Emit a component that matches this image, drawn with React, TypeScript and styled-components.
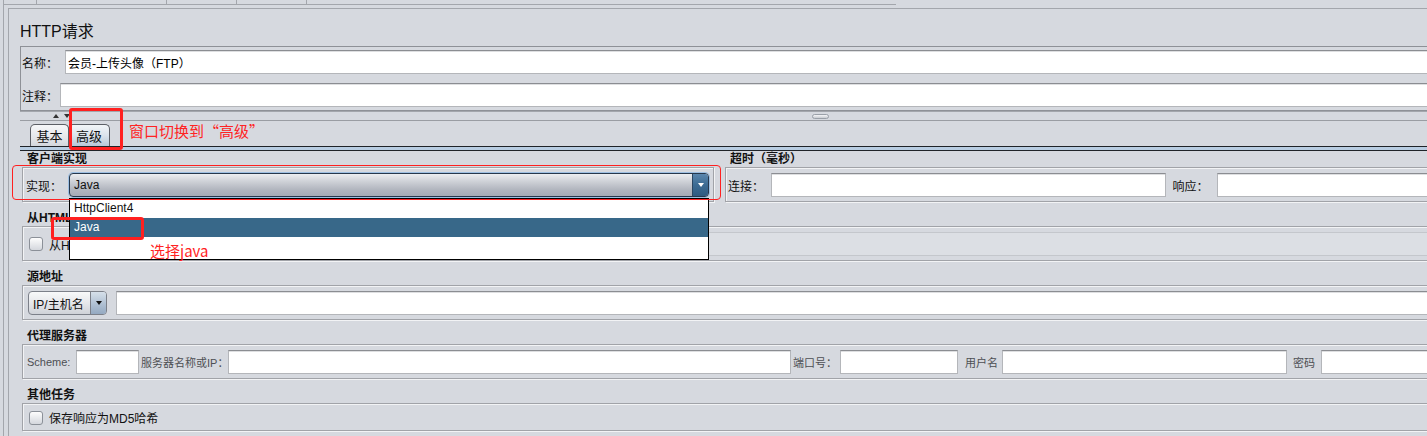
import React from 'react';
import styled, { createGlobalStyle } from 'styled-components';

const GlobalStyle = createGlobalStyle`
  html, body {
    margin: 0;
    padding: 0;
    overflow: hidden;
    background: #d6d9df;
  }
  body {
    font-family: 'Liberation Sans', 'Noto Sans CJK SC', sans-serif;
    font-size: 12px;
    color: #111;
  }
  * {
    box-sizing: border-box;
  }
`;

const Root = styled.div`
  width: 1620px;
  height: 436px;
  padding-left: 3px;
  background: #d6d9df;
  overflow: hidden;
`;

const Shell = styled.div`
  height: 100%;
  border-left: 1px solid #a3a6ac;
  display: flex;
  flex-direction: column;
`;

const TopStrip = styled.div`
  display: flex;
  width: 892px;
  height: 5px;
  border-bottom: 1px solid #a3a6ac;
`;

const TopCell = styled.div<{ $w: number }>`
  width: ${(p) => p.$w}px;
  border-right: 1px solid #a3a6ac;
`;

const Frame = styled.div`
  flex: 1;
  margin: 3px 0 0 4px;
  padding-left: 11px;
  border-left: 1px solid #a3a6ac;
  border-top: 1px solid #a3a6ac;
  display: flex;
  flex-direction: column;
`;

const Title = styled.div`
  margin-top: 13px;
  height: 20px;
  line-height: 20px;
  font-size: 16px;
  color: #111;
`;

const NamePanel = styled.div`
  margin-top: 4px;
  border: 1px solid #8e9197;
  padding: 3px 0 3px 1px;
  display: flex;
  flex-direction: column;
  gap: 9px;
`;

const Row = styled.div`
  display: flex;
  align-items: center;
`;

const Label = styled.span<{ $w: number }>`
  width: ${(p) => p.$w}px;
  flex: none;
  white-space: nowrap;
`;

const TextField = styled.input<{ $w?: number; $disabled?: boolean }>`
  height: 24px;
  ${(p) => (p.$w ? `width: ${p.$w}px; flex: none;` : 'flex: 1; min-width: 0;')}
  border: 1px solid #b4b6ba;
  border-top-color: #8b8d92;
  box-shadow: inset 0 1px 0 #dedfe1;
  background: ${(p) => (p.$disabled ? '#dcdfe4' : '#fff')};
  ${(p) => (p.$disabled ? 'border-color: #c4c7cc; box-shadow: none;' : '')}
  padding: 0 2px;
  font: inherit;
  color: #000;
  outline: none;
`;

const Splitter = styled.div`
  height: 10px;
  border-top: 1px solid #a3a6ac;
  border-bottom: 1px solid #9a9da3;
  display: grid;
  grid-template-columns: 1fr auto 1fr;
  align-items: center;
`;

const SplitArrows = styled.div`
  display: flex;
  gap: 5px;
  padding-left: 33px;
`;

const Tri = styled.span<{ $down?: boolean; $color?: string; $size?: number }>`
  width: 0;
  height: 0;
  border-left: ${(p) => p.$size ?? 3}px solid transparent;
  border-right: ${(p) => p.$size ?? 3}px solid transparent;
  ${(p) =>
    p.$down
      ? `border-top: ${(p.$size ?? 3) + 1}px solid ${p.$color ?? '#333'};`
      : `border-bottom: ${(p.$size ?? 3) + 1}px solid ${p.$color ?? '#333'};`}
`;

const Grip = styled.div`
  width: 17px;
  height: 5px;
  border: 1px solid #9aa0a8;
  border-radius: 3px;
  background: linear-gradient(#f4f5f7, #c9ccd2);
`;

const TabBar = styled.div`
  position: relative;
  margin-top: 3px;
  height: 22px;
  padding-left: 10px;
  display: flex;
  align-items: flex-end;
`;

const Tab = styled.div<{ $active?: boolean; $w: number }>`
  width: ${(p) => p.$w}px;
  height: 22px;
  display: flex;
  align-items: center;
  justify-content: center;
  border: 1px solid #5c5f66;
  border-bottom: none;
  border-radius: 5px 5px 0 0;
  margin-right: -1px;
  background: ${(p) =>
    p.$active
      ? 'linear-gradient(#f2f5f8 0%, #dbe3eb 50%, #b7c8d9 100%)'
      : 'linear-gradient(#f6f7f9 0%, #e4e6ea 60%, #d3d6dc 100%)'};
  color: #111;
  font-size: 13px;
`;

const TabLine = styled.div`
  height: 5px;
  border-top: 1px solid #1f2328;
  border-bottom: 1px solid #1f2328;
  background: #b8cde2;
`;

const Note = styled.div<{ $x: number; $y: number }>`
  position: absolute;
  left: ${(p) => p.$x}px;
  top: ${(p) => p.$y}px;
  color: #ff2323;
  font-size: 15px;
  line-height: 20px;
  white-space: nowrap;
  font-family: 'Noto Sans CJK SC', sans-serif;
  z-index: 6;
`;

const Mark = styled.div<{ $x: number; $y: number; $w: number; $h: number; $t: number }>`
  position: absolute;
  left: ${(p) => p.$x}px;
  top: ${(p) => p.$y}px;
  width: ${(p) => p.$w}px;
  height: ${(p) => p.$h}px;
  border: ${(p) => p.$t}px solid #ff2020;
  border-radius: ${(p) => (p.$t > 1 ? 3 : 4)}px;
  z-index: 6;
  pointer-events: none;
`;

const Content = styled.div`
  padding-left: 2px;
  display: flex;
  flex-direction: column;
`;

const Columns = styled.div`
  display: flex;
  gap: 11px;
`;

const Column = styled.div<{ $w?: number }>`
  position: relative;
  ${(p) => (p.$w ? `width: ${p.$w}px; flex: none;` : 'flex: 1;')}
  display: flex;
  flex-direction: column;
`;

const SectionLabel = styled.div<{ $mt?: number }>`
  margin-top: ${(p) => p.$mt ?? 0}px;
  height: 16px;
  line-height: 16px;
  padding-left: 5px;
  font-weight: bold;
  white-space: nowrap;
`;

const Box = styled.div<{ $pl?: number; $pr?: number }>`
  display: flex;
  align-items: center;
  padding: 5px ${(p) => p.$pr ?? 4}px 4px ${(p) => p.$pl ?? 3}px;
  border: 1px solid #a1a3a8;
  box-shadow: inset 1px 1px 0 #f2f3f5, 1px 1px 0 #f2f3f5;
`;

const ComboWrap = styled.div<{ $w?: number }>`
  position: relative;
  ${(p) => (p.$w ? `width: ${p.$w}px; flex: none;` : 'flex: 1;')}
`;

const Combo = styled.div<{ $active?: boolean }>`
  height: 24px;
  display: flex;
  align-items: stretch;
  border-radius: 4px;
  overflow: hidden;
  border: 1px solid ${(p) => (p.$active ? '#26384d' : '#7c8089')};
  box-shadow: ${(p) => (p.$active ? '0 0 0 1px #9dbfe2' : 'none')};
  background: ${(p) =>
    p.$active
      ? 'linear-gradient(#eceef1 0%, #cdd0d6 35%, #b2b6bf 70%, #a6abb5 100%)'
      : 'linear-gradient(#f8f9fa 0%, #e6e8eb 50%, #cfd2d8 100%)'};
`;

const ComboText = styled.span`
  flex: 1;
  display: flex;
  align-items: center;
  padding-left: 4px;
  white-space: nowrap;
`;

const ComboArrow = styled.span<{ $active?: boolean }>`
  width: 16px;
  flex: none;
  display: flex;
  align-items: center;
  justify-content: center;
  border-left: 1px solid ${(p) => (p.$active ? '#2b4763' : '#7c8089')};
  background: ${(p) =>
    p.$active
      ? 'linear-gradient(#5a86ad 0%, #3c6b93 50%, #2f5a80 100%)'
      : 'linear-gradient(#d6e0ea 0%, #b3c3d5 50%, #94a9c1 100%)'};
`;

const Popup = styled.div`
  position: absolute;
  top: 25px;
  left: 0;
  right: 0;
  height: 62px;
  border: 1px solid #000;
  background: #fff;
  z-index: 5;
`;

const PopItem = styled.div<{ $selected?: boolean }>`
  height: 19px;
  line-height: 19px;
  padding-left: 4px;
  background: ${(p) => (p.$selected ? '#386889' : '#fff')};
  color: ${(p) => (p.$selected ? '#fff' : '#111')};
`;

const Check = styled.span`
  width: 14px;
  height: 14px;
  flex: none;
  margin: 0 6px 0 2px;
  border: 1px solid #8b9098;
  border-radius: 3px;
  background: linear-gradient(#fdfdfd, #d4d7dd);
`;

const SmallLabel = styled.span<{ $w: number; $pl?: number }>`
  width: ${(p) => p.$w}px;
  padding-left: ${(p) => p.$pl ?? 0}px;
  flex: none;
  font-size: 11px;
  color: #4d4f53;
  white-space: nowrap;
`;

const Gap = styled.span<{ $w: number }>`
  width: ${(p) => p.$w}px;
  flex: none;
`;

export default function App() {
  return (
    <Root>
      <GlobalStyle />
      <Shell>
        <TopStrip>
          <TopCell $w={33} />
          <TopCell $w={130} />
          <TopCell $w={70} />
          <TopCell $w={70} />
        </TopStrip>
        <Frame>
          <Title>HTTP请求</Title>
          <NamePanel>
            <Row>
              <Label $w={43}>名称：</Label>
              <TextField readOnly value="会员-上传头像（FTP）" />
            </Row>
            <Row>
              <Label $w={38}>注释：</Label>
              <TextField readOnly value="" />
            </Row>
          </NamePanel>
          <Splitter>
            <SplitArrows>
              <Tri />
              <Tri $down />
            </SplitArrows>
            <Grip />
            <span />
          </Splitter>
          <TabBar>
            <Tab $w={39}>基本</Tab>
            <Tab $w={42} $active>高级</Tab>
            <Mark $x={49} $y={-16} $w={54} $h={42} $t={3} />
            <Note $x={109} $y={-3}>窗口切换到“高级”</Note>
          </TabBar>
          <TabLine />
          <Content>
            <Columns>
              <Column $w={692}>
                <SectionLabel>客户端实现</SectionLabel>
                <Box>
                  <Label $w={43}>实现：</Label>
                  <ComboWrap>
                    <Combo $active>
                      <ComboText>Java</ComboText>
                      <ComboArrow $active>
                        <Tri $down $color="#fff" />
                      </ComboArrow>
                    </Combo>
                    <Popup>
                      <PopItem>HttpClient4</PopItem>
                      <PopItem $selected>Java</PopItem>
                      <Mark $x={-19} $y={18} $w={93} $h={23} $t={3} />
                      <Note $x={80} $y={42}>选择java</Note>
                    </Popup>
                  </ComboWrap>
                </Box>
                <Mark $x={-10} $y={14} $w={709} $h={35} $t={1} />
              </Column>
              <Column>
                <SectionLabel>超时（毫秒）</SectionLabel>
                <Box $pl={2} $pr={8}>
                  <Label $w={43}>连接：</Label>
                  <TextField readOnly value="" />
                  <Gap $w={7} />
                  <Label $w={44}>响应：</Label>
                  <TextField readOnly value="" />
                </Box>
              </Column>
            </Columns>

            <SectionLabel $mt={8}>从HTML文件嵌入资源</SectionLabel>
            <Box $pl={4}>
              <Check />
              <Label $w={190}>从HTML文件获取所有内含的资源</Label>
              <Check />
              <Label $w={110}>并行下载. 数量：</Label>
              <TextField $w={40} $disabled readOnly value="6" />
              <Gap $w={8} />
              <Label $w={90}>URLs必须匹配：</Label>
              <TextField $disabled readOnly value="" />
            </Box>

            <SectionLabel $mt={8}>源地址</SectionLabel>
            <Box $pl={5}>
              <ComboWrap $w={79}>
                <Combo>
                  <ComboText>IP/主机名</ComboText>
                  <ComboArrow>
                    <Tri $down $color="#111" />
                  </ComboArrow>
                </Combo>
              </ComboWrap>
              <Gap $w={9} />
              <TextField readOnly value="" />
            </Box>

            <SectionLabel $mt={8}>代理服务器</SectionLabel>
            <Box $pl={4}>
              <SmallLabel $w={49}>Scheme:</SmallLabel>
              <TextField $w={63} readOnly value="" />
              <SmallLabel $w={89} $pl={2}>服务器名称或IP：</SmallLabel>
              <TextField $w={563} readOnly value="" />
              <SmallLabel $w={49} $pl={2}>端口号：</SmallLabel>
              <TextField $w={118} readOnly value="" />
              <SmallLabel $w={44} $pl={7}>用户名</SmallLabel>
              <TextField $w={285} readOnly value="" />
              <SmallLabel $w={34} $pl={6}>密码</SmallLabel>
              <TextField readOnly value="" />
            </Box>

            <SectionLabel $mt={8}>其他任务</SectionLabel>
            <Box $pl={4}>
              <Check />
              <span>保存响应为MD5哈希</span>
            </Box>
          </Content>
        </Frame>
      </Shell>
    </Root>
  );
}
